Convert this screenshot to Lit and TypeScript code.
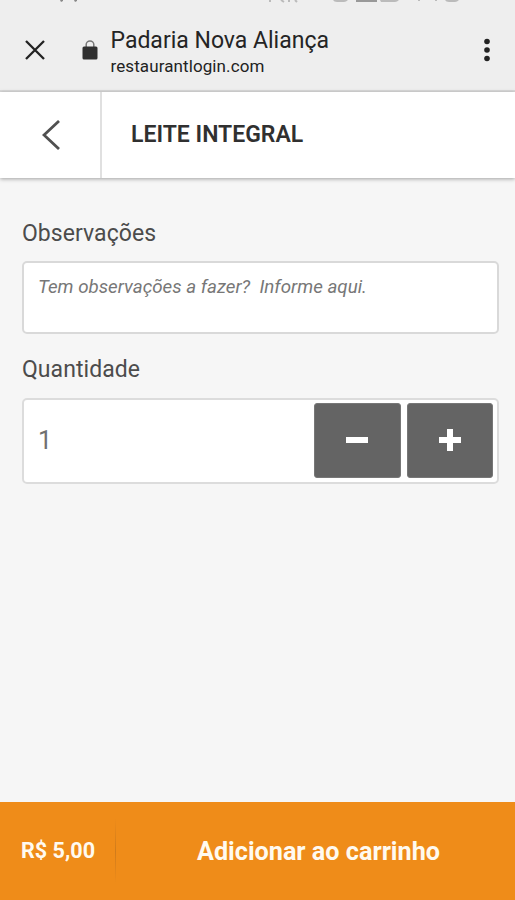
import { LitElement, html, css } from "lit";
import { customElement, state } from "lit/decorators.js";

@customElement("app-root")
export class AppRoot extends LitElement {
  @state() private quantity = 1;

  static styles = css`
    * { box-sizing: border-box; }
    :host {
      display: flex;
      flex-direction: column;
      width: 100%;
      height: 900px;
      overflow: hidden;
      background: #f6f6f6;
      font-family: Roboto, "Liberation Sans", sans-serif;
    }
    svg { display: block; flex: none; }
    button { border: 0; padding: 0; background: none; font: inherit; color: inherit; }
    .browser {
      height: 92px;
      background: #eee;
      border-bottom: 2px solid #dadada;
      flex: none;
    }
    .status { height: 3px; }
    .bar { display: flex; align-items: center; height: 87px; padding: 7px 22px 0 25px; }
    .close { margin-right: 37px; }
    .lock { margin-right: 12.5px; }
    .site { flex: 1; white-space: nowrap; color: #242424; padding-top: 4px; }
    .name { font-size: 23px; line-height: 28px; }
    .host { font-size: 17px; line-height: 23px; letter-spacing: 0.1px; color: #222; }
    .top {
      display: flex;
      height: 86px;
      flex: none;
      background: #fff;
      box-shadow: 0 1px 4px rgba(0, 0, 0, 0.35);
    }
    .back {
      width: 102px;
      border-right: 2px solid #e0e0e0;
      display: flex;
      align-items: center;
      padding-left: 42px;
    }
    .product {
      margin: 0;
      padding-left: 29px;
      font-size: 23px;
      line-height: 85px;
      font-weight: 600;
      color: #303030;
    }
    .form { flex: 1; padding: 42px 16px 0 22px; }
    .label { display: block; font-size: 23px; line-height: 28px; letter-spacing: 0.05px; color: #4c4c4c; }
    .notes {
      height: 73px;
      margin: 13px 0 22px;
      padding: 12px 14px;
      border: 2px solid #d9d9d9;
      border-radius: 5px;
      background: #fff;
      font-size: 18.75px;
      line-height: 24px;
      font-style: italic;
      color: #777;
      white-space: pre;
    }
    .stepper {
      display: flex;
      gap: 6px;
      height: 86px;
      margin-top: 14px;
      padding: 3px 4px 4px 14px;
      border: 2px solid #dcdcdc;
      border-radius: 5px;
      background: #fff;
    }
    .value { flex: 1; font-size: 25px; line-height: 76px; color: #707070; }
    .step {
      width: 86.5px;
      height: 75px;
      border-radius: 3px;
      border: 1px solid #777;
      background: #646464;
      display: flex;
      align-items: center;
      justify-content: center;
      padding-bottom: 2px;
    }
    .cart {
      flex: none;
      height: 98px;
      display: flex;
      align-items: center;
      background: #ef8c19;
      color: #fffaf0;
      font-weight: 700;
      white-space: nowrap;
    }
    .price { width: 115px; padding: 0 0 2px 21px; font-size: 21.6px; }
    .rule { width: 1px; height: 66px; background: linear-gradient(#ef8c19, #cf7b1b, #ef8c19); }
    .add { flex: 1; text-align: center; font-size: 25.2px; padding: 0 0 0 6px; }
  `;

  private change(by: number) {
    this.quantity = Math.max(1, this.quantity + by);
  }

  render() {
    return html`
      <header class="browser">
        <svg class="status" width="515" height="3" viewBox="0 0 515 3" fill="none">
          <path d="M60 0h3v1l-2 1zM74 0h3v1l-2 1z" fill="#888" />
          <path d="M270 0v2M281 0l3 2M289 0v2M295 0l2 2M419 0v1M436 0v1" stroke="#bbb" stroke-width="2" />
          <path d="M333 0h15q-2 2-4 2h-7q-3 0-4-2zM380 0h19q-2 2-4 2h-14zM445 0h14q-2 2-4 2h-6q-3 0-4-2z" fill="#bbb" />
          <path d="M356 0h21v2h-21z" fill="#999" />
        </svg>
        <div class="bar">
          <svg class="close" width="20" height="20" viewBox="0 0 20 20" stroke="#222" stroke-width="2.3"><path d="M1 1l18 18M19 1L1 19" /></svg>
          <svg class="lock" width="16" height="20" viewBox="0 0 16 20">
            <path d="M4.2 7V4.6a3.8 3.5 0 0 1 7.6 0V7" fill="none" stroke="#777" stroke-width="1.5" />
            <rect x=".5" y="6.5" width="15" height="13" rx="1.5" fill="#303030" />
          </svg>
          <div class="site">
            <div class="name">Padaria Nova Aliança</div>
            <div class="host">restaurantlogin.com</div>
          </div>
          <svg width="12" height="24" viewBox="0 0 12 24" fill="#222"><circle cx="6" cy="3.5" r="2.8" /><circle cx="6" cy="12" r="2.8" /><circle cx="6" cy="20.5" r="2.8" /></svg>
        </div>
      </header>
      <nav class="top">
        <button class="back" aria-label="Voltar">
          <svg width="18" height="30" viewBox="0 0 18 30" fill="none" stroke="#505050" stroke-width="2.8"><path d="M17 1L2 15l15 14" /></svg>
        </button>
        <h1 class="product">LEITE INTEGRAL</h1>
      </nav>
      <main class="form">
        <span class="label">Observações</span>
        <div class="notes">Tem observações a fazer?  Informe aqui.</div>
        <span class="label">Quantidade</span>
        <div class="stepper">
          <div class="value">${this.quantity}</div>
          <button class="step" aria-label="Diminuir" @click=${() => this.change(-1)}>
            <svg width="22" height="22" viewBox="0 0 22 22" fill="#fff"><path d="M0 8h22v6H0z" /></svg>
          </button>
          <button class="step" aria-label="Aumentar" @click=${() => this.change(1)}>
            <svg width="22" height="22" viewBox="0 0 22 22" fill="#fff"><path d="M8 0h6v8h8v6h-8v8H8v-8H0V8h8z" /></svg>
          </button>
        </div>
      </main>
      <footer class="cart">
        <div class="price">R$ 5,00</div>
        <div class="rule"></div>
        <button class="add">Adicionar ao carrinho</button>
      </footer>
    `;
  }
}
